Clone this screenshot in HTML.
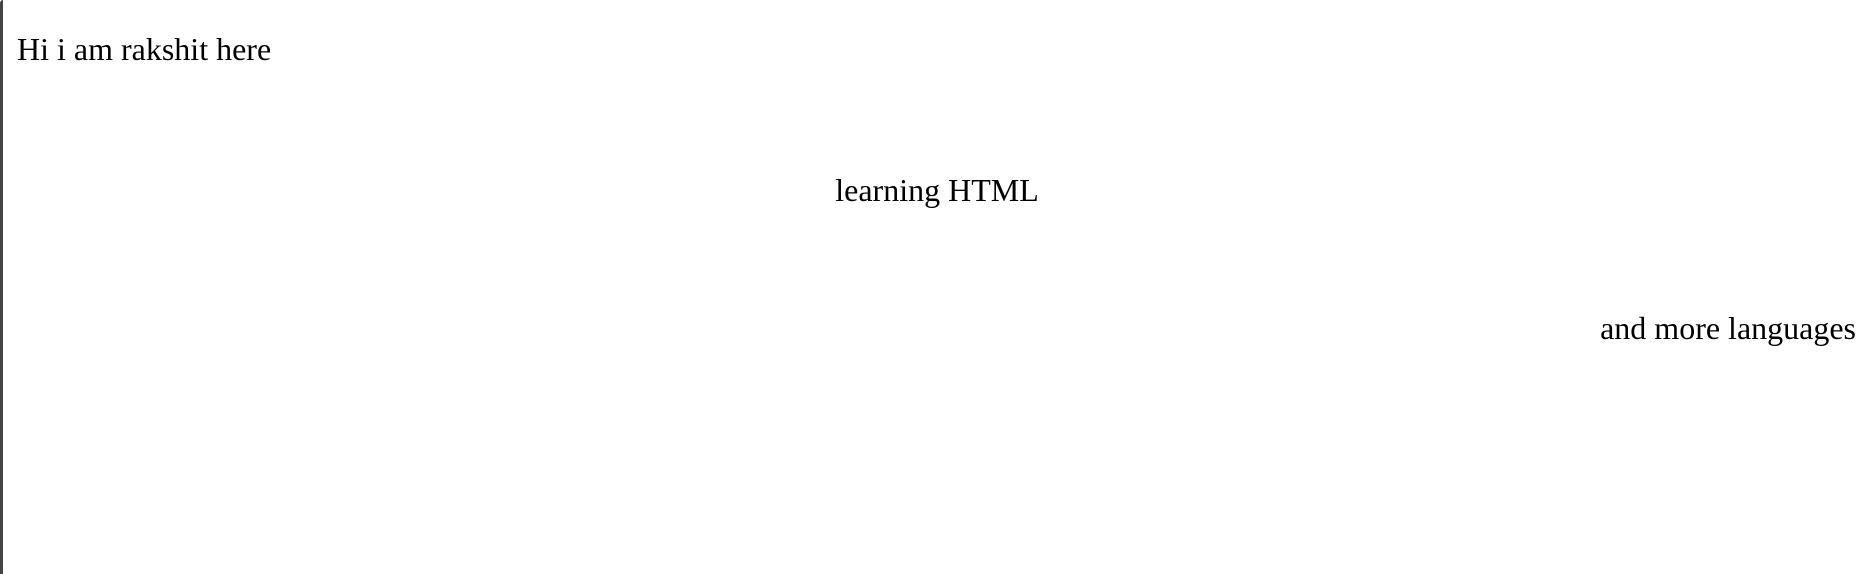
<!DOCTYPE html>
<html><head><style>
html,body{margin:0;padding:0;background:#fff;width:1868px;height:574px;overflow:hidden}
body{font-family:"Liberation Serif",serif;font-size:32px;color:#000;position:relative}
.b{position:absolute;left:0;top:0;width:3px;height:574px;background:#444;border-top-left-radius:6px}
p{position:absolute;margin:0;line-height:37px;white-space:nowrap}
</style></head><body>
<div class="b"></div>
<p style="left:17px;top:31px">Hi i am rakshit here</p>
<p style="left:0;width:1874px;text-align:center;top:172px">learning HTML</p>
<p style="right:12px;top:310px">and more languages</p>
</body></html>
